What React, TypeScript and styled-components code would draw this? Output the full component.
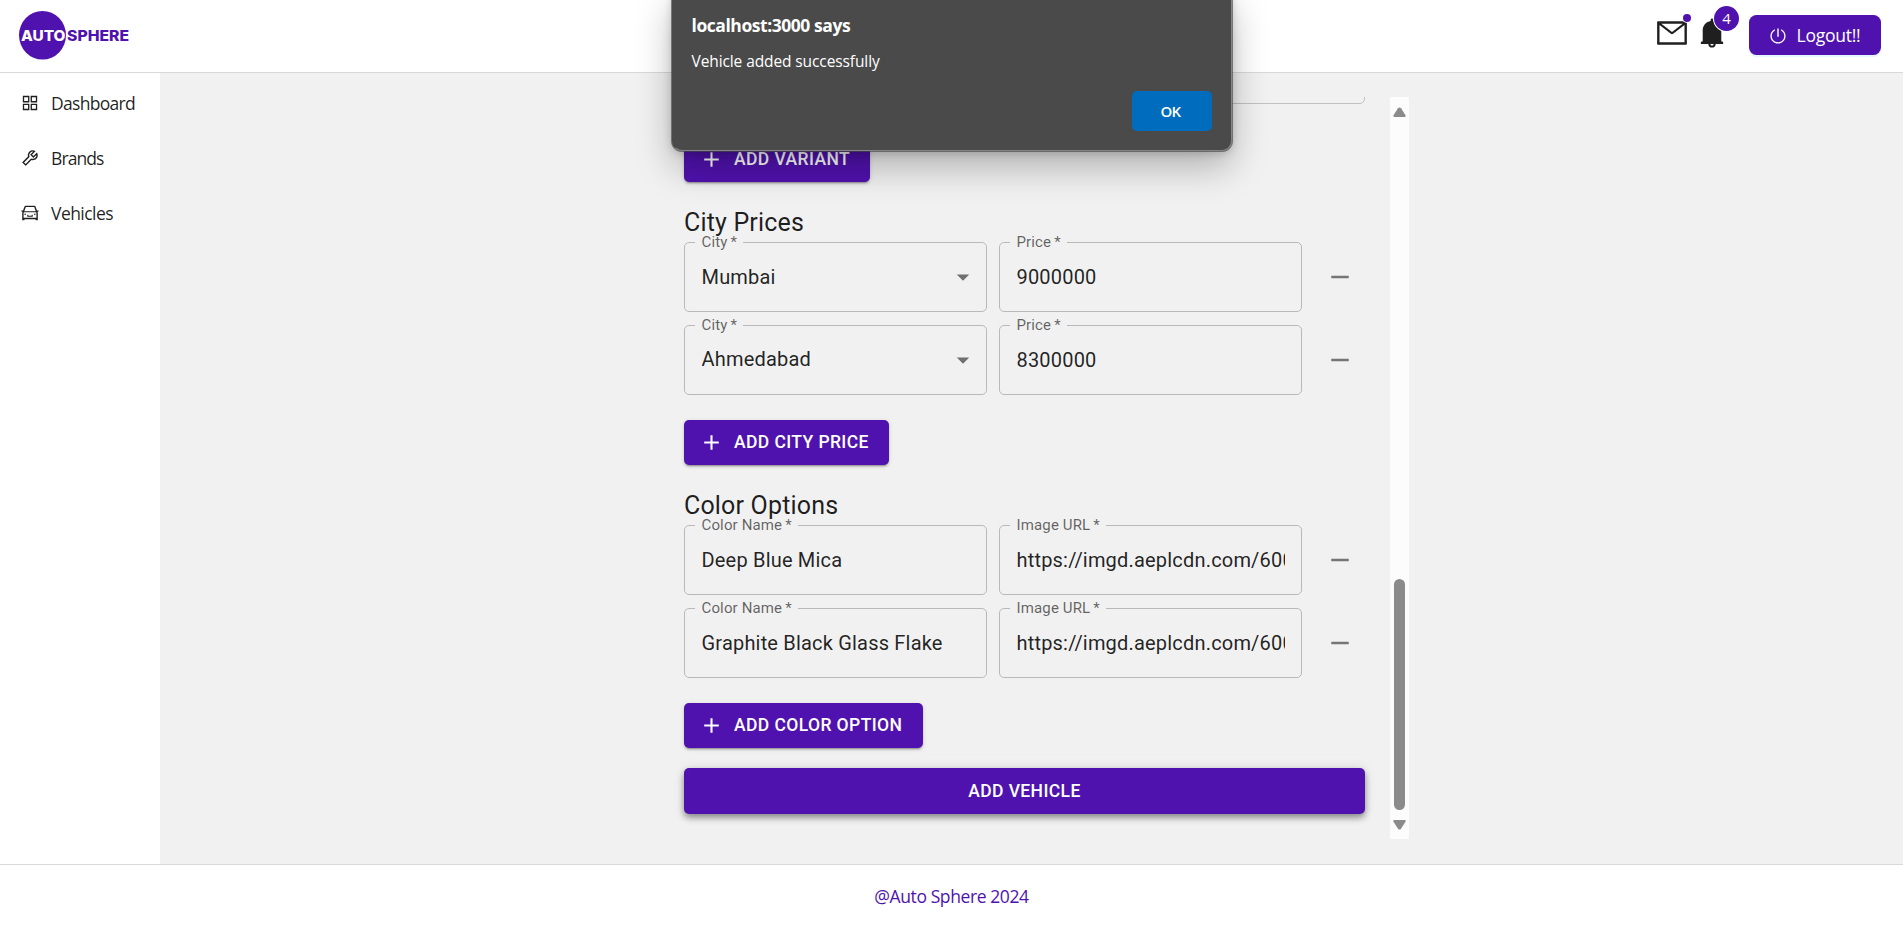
import React from "react";
import styled, { createGlobalStyle } from "styled-components";
import {
  AiFillBell,
  AiOutlineAppstore,
  AiOutlineCar,
  AiOutlineMail,
  AiOutlinePoweroff,
  AiOutlineTool,
} from "react-icons/ai";

const PURPLE = "#5012ae";
const UI = '"Segoe UI", "Open Sans", "Noto Sans", sans-serif';

const GlobalStyle = createGlobalStyle`
  * { box-sizing: border-box; }
  body { margin: 0; background: #fff; overflow: hidden; font-family: ${UI}; color: rgba(0, 0, 0, 0.88); }
`;

const Page = styled.div`
  display: flex;
  flex-direction: column;
  width: 100vw;
  height: 925px;
`;

const Header = styled.header`
  display: flex;
  align-items: flex-start;
  justify-content: space-between;
  height: 73px;
  flex: none;
  padding-right: 22px;
  border-bottom: 1px solid #d9d9d9;
`;

const Logo = styled.svg`
  display: block;
  width: 140px;
  height: 72px;
`;

const Tools = styled.div`
  display: flex;
  align-items: flex-start;
  padding-top: 15px;
`;

const IconSlot = styled.span<{ $gap: number }>`
  position: relative;
  display: flex;
  margin: 1px ${(p) => p.$gap}px 0 0;
  font-size: 34px;
  color: #1f1f1f;
`;

const Dot = styled.span`
  position: absolute;
  top: -2px;
  right: -2px;
  width: 8px;
  height: 8px;
  border-radius: 50%;
  background: ${PURPLE};
  box-shadow: 0 0 0 1px #fff;
`;

const Count = styled.span`
  position: absolute;
  top: -10px;
  right: -10px;
  width: 25px;
  height: 25px;
  border-radius: 50%;
  background: ${PURPLE};
  box-shadow: 0 0 0 1px #fff;
  color: #fff;
  font-size: 15px;
  line-height: 25px;
  text-align: center;
`;

const Logout = styled.button`
  display: flex;
  align-items: center;
  width: 132px;
  height: 40px;
  padding: 0 0 0 19.5px;
  border: 0;
  border-radius: 7.5px;
  background: ${PURPLE};
  box-shadow: 0 2px 0 rgba(5, 145, 255, 0.1);
  color: #fff;
  font: 400 17.5px ${UI};
  letter-spacing: -0.25px;

  svg { font-size: 18px; margin: 1px 10px 0 0; }
`;

const Body = styled.div`
  display: flex;
  flex: 1;
  min-height: 0;
`;

const Sidebar = styled.nav`
  display: flex;
  flex-direction: column;
  gap: 5px;
  width: 160px;
  padding-top: 5px;
`;

const MenuItem = styled.a<{ $spacing: number }>`
  display: flex;
  align-items: center;
  gap: 11.5px;
  height: 50px;
  padding-left: 19.5px;
  font-size: 17.5px;
  letter-spacing: ${(p) => p.$spacing}px;

  svg { width: 20px; height: 20px; flex: none; }
`;

const Main = styled.main`
  flex: 1;
  display: flex;
  justify-content: center;
  padding: 24px 0 25px;
  background: #f1f1f1;
`;

const ScrollPanel = styled.section`
  display: flex;
  width: 755px;
  height: 742px;
  overflow: hidden;
`;

const Form = styled.form`
  display: flex;
  flex-direction: column;
  justify-content: flex-end;
  align-items: flex-start;
  width: 736px;
  padding: 0 25px 25px 30px;
  font-family: Roboto, sans-serif;
`;

const PreviousField = styled.div`
  align-self: stretch;
  flex: none;
  height: 70px;
  margin-bottom: 21px;
  border: 1px solid #c2c2c2;
  border-radius: 5px;
`;

const Heading = styled.h6`
  margin: 20px 0 0;
  padding-top: 1px;
  height: 40px;
  font-size: 25px;
  font-weight: 400;
  line-height: 40px;
  letter-spacing: 0.17px;
  color: rgba(0, 0, 0, 0.88);
`;

const Row = styled.div`
  display: flex;
  gap: 12px;
  height: 70px;
  margin-bottom: 13px;
`;

const Outline = styled.fieldset`
  width: 303px;
  min-width: 0;
  height: 79px;
  margin: -9px 0 0;
  padding: 0 10px;
  border: 1px solid #b9b9b9;
  border-radius: 5px;
`;

const Legend = styled.legend`
  height: 18px;
  padding: 0 6px 0 6.5px;
  font-size: 15px;
  line-height: 19px;
  letter-spacing: 0.14px;
  color: rgba(0, 0, 0, 0.6);
`;

const Required = styled.span`
  margin-left: 3px;
`;

const Value = styled.div<{ $lift?: boolean }>`
  display: flex;
  align-items: center;
  justify-content: space-between;
  height: 52px;
  margin: ${(p) => (p.$lift ? -1 : 0)}px 6px 0 6.5px;
  overflow: hidden;
  white-space: nowrap;
  font-size: 20px;
  letter-spacing: 0.19px;
  color: rgba(0, 0, 0, 0.87);
`;

const SelectValue = styled(Value)`
  margin-right: -2px;

  svg { position: relative; top: ${(p) => (p.$lift ? 1 : 0)}px; }
`;

const RemoveButton = styled.button`
  display: flex;
  align-items: center;
  justify-content: center;
  width: 50px;
  height: 70px;
  margin-left: 1px;
  padding: 0;
  border: 0;
  background: none;
`;

const AddButton = styled.button<{ $width: number }>`
  display: flex;
  align-items: center;
  flex: none;
  width: ${(p) => p.$width}px;
  height: 45px;
  margin-top: 12px;
  padding: 0 0 0 15px;
  border: 0;
  border-radius: 5px;
  background: ${PURPLE};
  box-shadow: 0 3px 1px -2px rgba(0, 0, 0, 0.2), 0 2px 2px rgba(0, 0, 0, 0.14), 0 1px 5px rgba(0, 0, 0, 0.12);
  color: #fff;
  font: 500 17.5px Roboto, sans-serif;
  letter-spacing: 0.4px;
  white-space: nowrap;

  svg { margin-right: 10px; }
  span { padding-bottom: 2px; }
`;

const SubmitButton = styled.button`
  align-self: stretch;
  flex: none;
  height: 46px;
  margin-top: 20px;
  border: 0;
  border-radius: 5px;
  background: ${PURPLE};
  box-shadow: 0 3px 6px -1px rgba(0, 0, 0, 0.3), 0 5px 7px rgba(0, 0, 0, 0.16), 0 1px 12px rgba(0, 0, 0, 0.12);
  color: #fff;
  font: 500 17.5px Roboto, sans-serif;
  letter-spacing: 0.4px;
`;

const Scrollbar = styled.div`
  display: flex;
  flex-direction: column;
  align-items: center;
  width: 19px;
  padding: 10px 0 9px;
  background: #fcfcfc;
`;

const Thumb = styled.div`
  width: 11px;
  height: 231px;
  margin: auto 0 10px;
  border-radius: 6px;
  background: #8b8b8b;
`;

const Footer = styled.footer`
  height: 61px;
  flex: none;
  border-top: 1px solid #d9d9d9;
  color: ${PURPLE};
  font-size: 17.5px;
  line-height: 63px;
  letter-spacing: -0.4px;
  text-align: center;
`;

const Dialog = styled.div`
  position: absolute;
  top: -10px;
  left: 672px;
  width: 560px;
  height: 161px;
  padding: 22px 19px 19px 18.5px;
  display: flex;
  flex-direction: column;
  border-radius: 10px;
  background: #4a4a4a;
  border: 1px solid #858585;
  border-left-color: #4a4a4a;
  box-shadow: 0 0 0 1px rgba(70, 70, 70, 0.65), 0 16px 36px rgba(0, 0, 0, 0.27), 0 2px 10px rgba(0, 0, 0, 0.18);
  color: #fff;
`;

const DialogTitle = styled.div`
  font-size: 17.5px;
  font-weight: 700;
  line-height: 24px;
  letter-spacing: -0.45px;
`;

const DialogText = styled.div`
  margin-top: 14px;
  font-size: 15.5px;
  line-height: 20px;
  letter-spacing: -0.1px;
`;

const OkButton = styled.button`
  align-self: flex-end;
  width: 80px;
  height: 40px;
  flex: none;
  margin-top: auto;
  padding: 0 3px 1px 0;
  border: 0;
  border-radius: 5px;
  background: #006cbe;
  color: #fff;
  font: 600 15px ${UI};
  letter-spacing: -0.6px;
`;

const PlusIcon = () => (
  <svg width="25" height="25" viewBox="0 0 24 24" fill="#fff">
    <path d="M19 13h-6v6h-2v-6H5v-2h6V5h2v6h6z" />
  </svg>
);

const MinusIcon = () => (
  <svg width="30" height="30" viewBox="0 0 24 24" fill="#757575">
    <path d="M19 13H5v-2h14z" />
  </svg>
);

const CaretIcon = () => (
  <svg width="30" height="30" viewBox="0 0 24 24" fill="#707070">
    <path d="m7 10 5 5 5-5z" />
  </svg>
);

const ScrollArrow = ({ down }: { down?: boolean }) => (
  <svg width="13" height="10" viewBox="0 0 13 10" fill="#8b8b8b">
    <path
      d={
        down
          ? "M1.2 0h10.6q1.4.3.7 1.8L8 8.7q-1.5 1.8-3 0L.5 1.8Q-.2.3 1.2 0z"
          : "M1.2 10h10.6q1.4-.3.7-1.8L8 1.3q-1.5-1.8-3 0L.5 8.2q-.7 1.5.7 1.8z"
      }
    />
  </svg>
);

type FieldProps = { label: string; value: string; select?: boolean; lift?: boolean };

const Field = ({ label, value, select, lift }: FieldProps) => (
  <Outline>
    <Legend>
      {label}
      <Required>*</Required>
    </Legend>
    {select ? (
      <SelectValue $lift={lift}>
        {value}
        <CaretIcon />
      </SelectValue>
    ) : (
      <Value>{value}</Value>
    )}
  </Outline>
);

const cityPrices = [
  { city: "Mumbai", price: "9000000" },
  { city: "Ahmedabad", price: "8300000" },
];

const colorOptions = [
  { name: "Deep Blue Mica", url: "https://imgd.aeplcdn.com/600" },
  { name: "Graphite Black Glass Flake", url: "https://imgd.aeplcdn.com/600" },
];

export default function App() {
  return (
    <>
      <GlobalStyle />
      <Page>
        <Header>
          <Logo viewBox="0 0 140 72">
            <ellipse cx="42.5" cy="35.3" rx="23.5" ry="24.3" fill={PURPLE} />
            <g fontFamily="Inter, sans-serif" fontWeight="800" fontSize="14.3">
              <text x="21" y="40.8" textLength="44.5" lengthAdjust="spacingAndGlyphs" fill="#fff">
                AUTO
              </text>
              <text x="67" y="40.8" textLength="62" lengthAdjust="spacingAndGlyphs" fill={PURPLE}>
                SPHERE
              </text>
            </g>
          </Logo>
          <Tools>
            <IconSlot $gap={6}>
              <AiOutlineMail />
              <Dot />
            </IconSlot>
            <IconSlot $gap={20}>
              <AiFillBell />
              <Count>4</Count>
            </IconSlot>
            <Logout>
              <AiOutlinePoweroff />
              Logout!!
            </Logout>
          </Tools>
        </Header>
        <Body>
          <Sidebar>
            <MenuItem $spacing={-0.7}>
              <AiOutlineAppstore />
              Dashboard
            </MenuItem>
            <MenuItem $spacing={-0.9}>
              <AiOutlineTool />
              Brands
            </MenuItem>
            <MenuItem $spacing={-0.55}>
              <AiOutlineCar />
              Vehicles
            </MenuItem>
          </Sidebar>
          <Main>
            <ScrollPanel>
              <Form>
                <PreviousField />
                <AddButton type="button" $width={186}>
                  <PlusIcon />
                  <span>ADD VARIANT</span>
                </AddButton>
                <Heading>City Prices</Heading>
                {cityPrices.map((c, i) => (
                  <Row key={c.city}>
                    <Field label="City" value={c.city} select lift={i === 1} />
                    <Field label="Price" value={c.price} />
                    <RemoveButton type="button">
                      <MinusIcon />
                    </RemoveButton>
                  </Row>
                ))}
                <AddButton type="button" $width={205}>
                  <PlusIcon />
                  <span>ADD CITY PRICE</span>
                </AddButton>
                <Heading>Color Options</Heading>
                {colorOptions.map((c) => (
                  <Row key={c.name}>
                    <Field label="Color Name" value={c.name} />
                    <Field label="Image URL" value={c.url} />
                    <RemoveButton type="button">
                      <MinusIcon />
                    </RemoveButton>
                  </Row>
                ))}
                <AddButton type="button" $width={239}>
                  <PlusIcon />
                  <span>ADD COLOR OPTION</span>
                </AddButton>
                <SubmitButton type="button">ADD VEHICLE</SubmitButton>
              </Form>
              <Scrollbar>
                <ScrollArrow />
                <Thumb />
                <ScrollArrow down />
              </Scrollbar>
            </ScrollPanel>
          </Main>
        </Body>
        <Footer>@Auto Sphere 2024</Footer>
      </Page>
      <Dialog role="alertdialog">
        <DialogTitle>localhost:3000 says</DialogTitle>
        <DialogText>Vehicle added successfully</DialogText>
        <OkButton>OK</OkButton>
      </Dialog>
    </>
  );
}
